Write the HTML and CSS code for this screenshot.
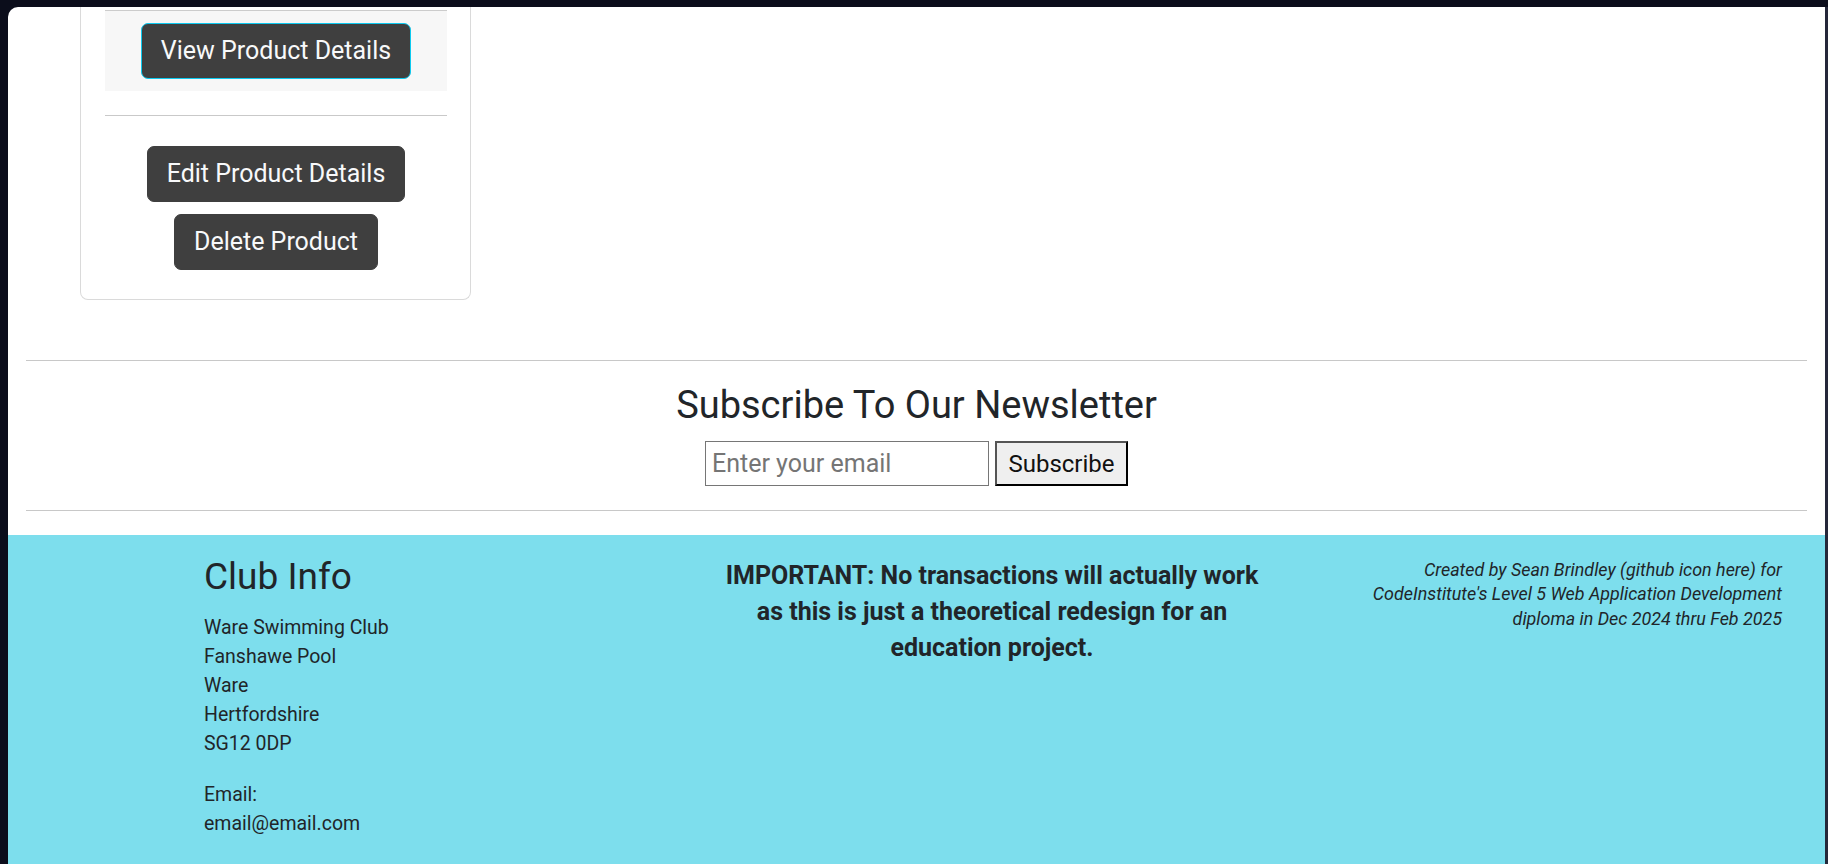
FILE: index.html
```html
<!DOCTYPE html>
<html lang="en">
<head>
<meta charset="utf-8">
<title>Ware Swimming Club - Product</title>
<link rel="stylesheet" href="styles.css">
</head>
<body>
<div class="window">
  <main class="main">
    <div class="card">
      <div class="card-top">
        <a class="btn btn-view" href="#">View Product Details</a>
      </div>
      <hr class="card-rule">
      <div class="card-actions">
        <a class="btn" href="#">Edit Product Details</a>
        <a class="btn" href="#">Delete Product</a>
      </div>
    </div>
  </main>

  <hr class="page-rule first">
  <section class="newsletter">
    <h2 class="newsletter-title">Subscribe To Our Newsletter</h2>
    <form class="newsletter-form">
      <input class="email-input" type="email" placeholder="Enter your email">
      <button class="subscribe-btn" type="button">Subscribe</button>
    </form>
  </section>
  <hr class="page-rule last">

  <footer class="footer">
    <div class="club">
      <h3 class="club-title">Club Info</h3>
      <p class="club-lines">Ware Swimming Club<br>Fanshawe Pool<br>Ware<br>Hertfordshire<br>SG12 0DP</p>
      <p class="club-lines">Email:<br>email@email.com</p>
    </div>
    <div class="notice">
      <p>IMPORTANT: No transactions will actually work<br>as this is just a theoretical redesign for an<br>education project.</p>
    </div>
    <div class="credit">
      <p>Created by Sean Brindley (github icon here) for<br>CodeInstitute's Level 5 Web Application Development<br>diploma in Dec 2024 thru Feb 2025</p>
    </div>
  </footer>
</div>
</body>
</html>
```

FILE: styles.css
```css
html, body {
  margin: 0;
  padding: 0;
  height: 100%;
  overflow: hidden;
}

body {
  background: #0b0d1b;
  font-family: Roboto, "Liberation Sans", sans-serif;
  color: #212529;
}

.window {
  margin: 7px 3px 0 8px;
  background: #ffffff;
  border-top-left-radius: 10px;
  min-height: calc(100vh - 7px);
  overflow: hidden;
  box-shadow: 3px 0 0 #25283a;
}

.main {
  padding-left: 72px;
}

.card {
  width: 391px;
  border: 1px solid #dadada;
  border-top: none;
  border-radius: 0 0 8px 8px;
  padding: 3px 23px 29px 24px;
  box-sizing: border-box;
}

.card-top {
  background: #f7f7f7;
  border-top: 1px solid #cccccc;
  padding: 12px 0;
  display: flex;
  justify-content: center;
}

.card-rule {
  border: none;
  border-top: 1px solid #c9c9c9;
  margin: 24px 0 0;
}

.card-actions {
  display: flex;
  flex-direction: column;
  align-items: center;
  gap: 12px;
  padding-top: 30px;
}

.btn {
  display: inline-block;
  background: #3f3f3f;
  color: #f8f9fa;
  border: 1px solid #3f3f3f;
  border-radius: 7px;
  font-size: 25px;
  line-height: 36px;
  padding: 9px 18.5px;
  text-decoration: none;
}

.btn-view {
  border-color: #0dcaf0;
}

.page-rule {
  border: none;
  border-top: 1px solid #c8c8c8;
  margin: 0 18px;
}

.page-rule.first {
  margin-top: 60px;
}

.newsletter {
  display: flex;
  flex-direction: column;
  align-items: center;
  padding: 22px 0 24px;
}

.newsletter-title {
  margin: 0;
  font-size: 38px;
  font-weight: 400;
  line-height: 45px;
}

.newsletter-form {
  display: flex;
  gap: 6px;
  margin-top: 13px;
}

.email-input {
  width: 284px;
  height: 45px;
  box-sizing: border-box;
  border: 1px solid #767676;
  padding: 0 6px;
  font-family: inherit;
  font-size: 25px;
  color: #212529;
  background: #fff;
}

.email-input::placeholder {
  color: #757575;
}

.subscribe-btn {
  width: 133px;
  height: 45px;
  box-sizing: border-box;
  background: #efefef;
  border: 2px solid;
  border-color: #555555 #000000 #000000 #555555;
  font-family: inherit;
  font-size: 24px;
  color: #111;
  padding: 0;
}

.footer {
  margin-top: 24px;
  background: #7ddeed;
  display: grid;
  grid-template-columns: 498px 580px 1fr;
  padding: 20px 43px 60px 196px;
}

.club-title {
  margin: 0;
  font-size: 37px;
  font-weight: 400;
  line-height: 44px;
}

.club-lines {
  margin: 13.5px 0 0;
  font-size: 19.5px;
  line-height: 29px;
}

.club-lines + .club-lines {
  margin-top: 22.5px;
}

.notice p {
  margin: 3px 0 0;
  text-align: center;
  font-weight: 700;
  font-size: 25px;
  line-height: 36px;
}

.credit p {
  margin: 2.6px 0 0;
  text-align: right;
  font-style: italic;
  font-size: 17.9px;
  line-height: 24.8px;
}
```
